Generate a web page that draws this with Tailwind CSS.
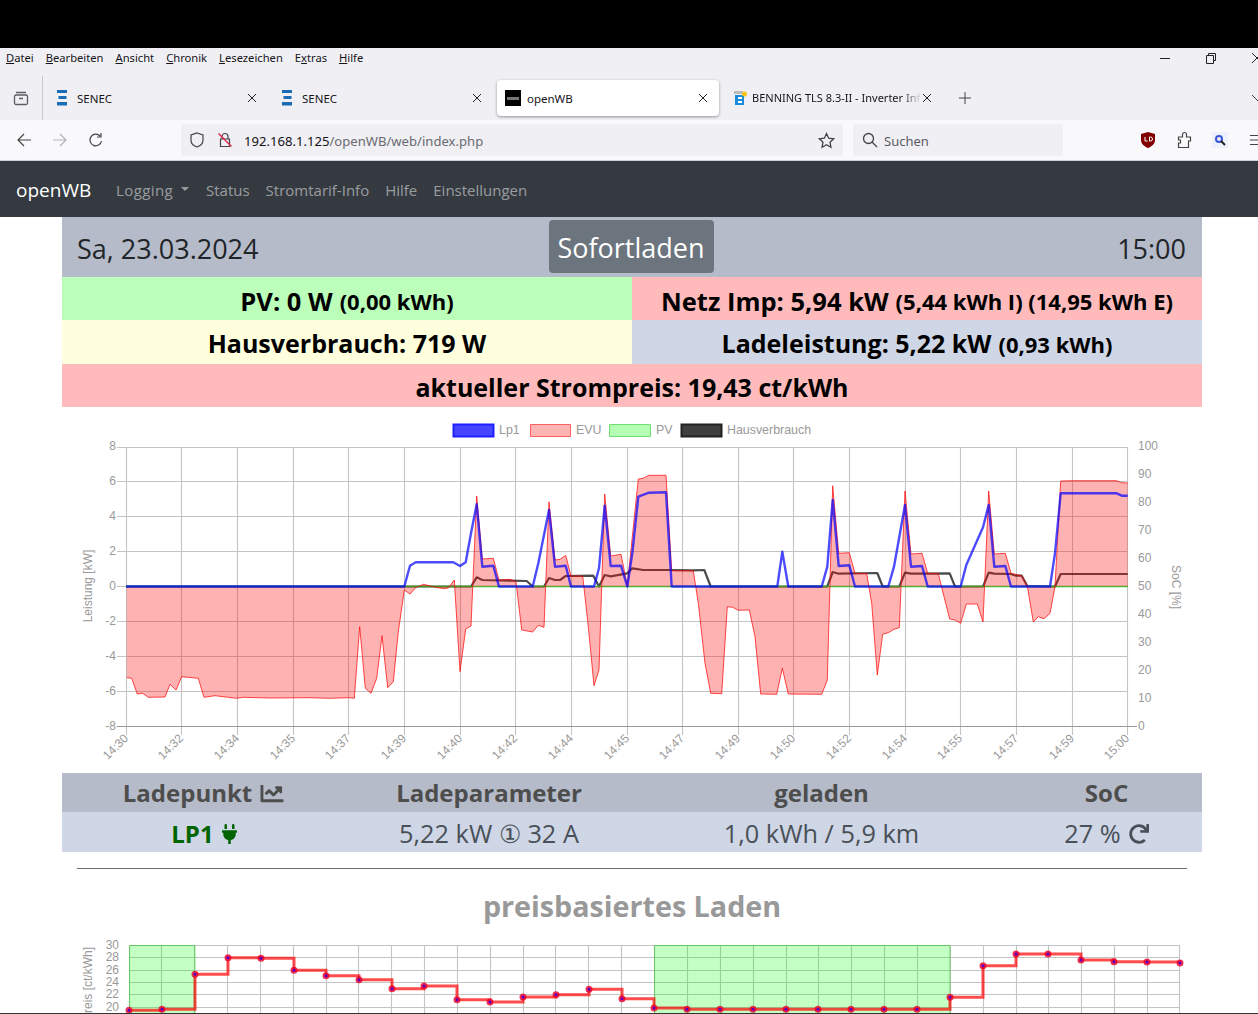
<!DOCTYPE html>
<html lang="de">
<head>
<meta charset="utf-8">
<title>openWB</title>
<script src="https://cdn.jsdelivr.net/npm/@tailwindcss/browser@4"></script>
</head>
<body class="bg-white overflow-hidden">
<div class="w-[1258px] h-[1014px] overflow-hidden flex flex-col font-['Open_Sans',sans-serif]">

  <!-- window top -->
  <div class="h-[48px] shrink-0 bg-black"></div>

  <!-- menu bar -->
  <div class="h-[28px] shrink-0 bg-[#f0f0f4] flex items-center pl-[6px] relative font-['Noto_Sans',sans-serif] text-[11.2px] text-[#15141a] gap-[12px] pb-[10px] pt-[2px]">
    <span><u>D</u>atei</span><span><u>B</u>earbeiten</span><span><u>A</u>nsicht</span><span><u>C</u>hronik</span><span><u>L</u>esezeichen</span><span>E<u>x</u>tras</span><span><u>H</u>ilfe</span>
    <div class="ml-auto flex items-center h-full">
      <svg width="12" height="12" viewBox="0 0 12 12" class="mr-[34px]" fill="none" stroke="#222"><path d="M1 6.500h10"/></svg>
      <svg width="12" height="12" viewBox="0 0 12 12" class="mr-[34px]" fill="none" stroke="#222"><path d="M1.500 3.500h7v8h-7zM3.500 3.500v-2h7v7h-2"/></svg>
      <svg width="7" height="12" viewBox="0 0 7 12" fill="none" stroke="#222"><path d="M1 1l6 6M1 11l6-6" /></svg>
    </div>
  </div>

  <!-- tab strip -->
  <div class="h-[44px] shrink-0 bg-[#f0f0f4] flex items-center font-['Noto_Sans',sans-serif] text-[11.5px] text-[#15141a] relative">
    <div class="w-[43px] h-full flex items-center justify-center border-r border-[#c8c8cc]">
      <svg width="16" height="16" viewBox="0 0 16 16" fill="none" stroke="#5b5b66" stroke-width="1.3"><path d="M3 2.500h10M1.500 6.500a1.500 1.500 0 0 1 1.500-1.500h10a1.500 1.500 0 0 1 1.500 1.500V13a1.500 1.500 0 0 1-1.500 1.500H3A1.500 1.500 0 0 1 1.500 13zM6 8.500h4"/></svg>
    </div>
    <div class="w-[224px] h-[36px] flex items-center pl-[13px] shrink-0">
      <svg width="12" height="16" viewBox="0 0 12 16" fill="#1a6db5" class="mr-[9px]"><path d="M1 0h10v3H1zM2.500 6h8v3h-8zM1 12h10v3.500H1z"/></svg>
      <span class="pt-[1px]">SENEC</span>
      <svg width="10" height="10" viewBox="0 0 10 10" stroke="#222" class="ml-auto mr-[10px]"><path d="M1 1l8 8M9 1l-8 8"/></svg>
    </div>
    <div class="w-[228px] h-[36px] flex items-center pl-[14px] shrink-0">
      <svg width="12" height="16" viewBox="0 0 12 16" fill="#1a6db5" class="mr-[9px]"><path d="M1 0h10v3H1zM2.500 6h8v3h-8zM1 12h10v3.500H1z"/></svg>
      <span class="pt-[1px]">SENEC</span>
      <svg width="10" height="10" viewBox="0 0 10 10" stroke="#222" class="ml-auto mr-[13px]"><path d="M1 1l8 8M9 1l-8 8"/></svg>
    </div>
    <div class="w-[222px] ml-[2px] h-[36px] bg-white rounded-[4px] shadow-[0_1px_3px_rgba(0,0,0,0.4)] flex items-center pl-[8px] shrink-0">
      <span class="w-[16px] h-[16px] bg-black mr-[6px] flex items-center justify-center"><span class="w-[12px] h-[3px] bg-[#777]"></span></span>
      <span class="pt-[1px]">openWB</span>
      <svg width="10" height="10" viewBox="0 0 10 10" stroke="#222" class="ml-auto mr-[11px]"><path d="M1 1l8 8M9 1l-8 8"/></svg>
    </div>
    <div class="h-[36px] flex items-center pl-[14px] shrink-0">
      <svg width="14" height="16" viewBox="0 0 14 16" class="mr-[5px] shrink-0"><path d="M1 1h9v3H1z" fill="#bbb"/><path d="M2 5h9v10H2z" fill="#1c8ad6"/><path d="M5 7h4v2H5zM5 11h4v2H5z" fill="#fff"/><circle cx="11.500" cy="4" r="2.500" fill="#f5c518"/></svg>
      <span class="whitespace-nowrap w-[170px] shrink-0 pt-[1px] text-[11px] [mask-image:linear-gradient(to_right,black_88%,transparent)]">BENNING TLS 8.3-II - Inverter Inf</span>
      <svg width="10" height="10" viewBox="0 0 10 10" stroke="#222" class="shrink-0"><path d="M1 1l8 8M9 1l-8 8"/></svg>
      <svg width="14" height="14" viewBox="0 0 14 14" stroke="#444" class="ml-[26px] shrink-0"><path d="M7 1v12M1 7h12"/></svg>
    </div>
    <svg width="6" height="8" viewBox="0 0 6 8" fill="none" stroke="#444" class="ml-auto"><path d="M0 1l6 6"/></svg>
  </div>

  <!-- toolbar -->
  <div class="h-[41px] shrink-0 bg-[#f9f9fb] border-b border-[#cfcfd8] flex items-center font-['Noto_Sans',sans-serif] text-[13px] text-[#15141a]">
    <svg width="16" height="16" viewBox="0 0 16 16" fill="none" stroke="#444" stroke-width="1.2" class="ml-[16px]"><path d="M15 8H2M8 2L2 8l6 6"/></svg>
    <svg width="16" height="16" viewBox="0 0 16 16" fill="none" stroke="#b4b4b8" stroke-width="1.2" class="ml-[20px]"><path d="M1 8h13M8 2l6 6-6 6"/></svg>
    <svg width="16" height="16" viewBox="0 0 16 16" fill="none" stroke="#444" stroke-width="1.2" class="ml-[20px]"><path d="M13.500 9a5.800 5.800 0 1 1-1.500-5M13 1v4H9"/></svg>
    <div class="w-[662px] h-[32px] ml-[77px] bg-[#f0f0f4] rounded-[4px] flex items-center pl-[8px] pr-[8px]">
      <svg width="16" height="16" viewBox="0 0 16 16" fill="none" stroke="#444" stroke-width="1.2"><path d="M8 1l6 2v5c0 3.500-3 6-6 7-3-1-6-3.500-6-7V3z"/></svg>
      <svg width="16" height="16" viewBox="0 0 16 16" fill="none" class="ml-[12px]"><path d="M5 7V4.500a3 3 0 0 1 6 0V7M3.500 7h9v7.500h-9z" stroke="#444" stroke-width="1.2"/><path d="M1.500 1.500l13 13" stroke="#e22850" stroke-width="1.4"/></svg>
      <span class="ml-[11px] pt-[3px] text-[13.1px]">192.168.1.125<span class="text-[#6a6a72]">/openWB/web/index.php</span></span>
      <svg width="17" height="17" viewBox="0 0 16 16" fill="none" stroke="#444" stroke-width="1.2" class="ml-auto"><path d="M8 1.500l2 4.300 4.700.6-3.400 3.200.9 4.700L8 12l-4.200 2.300.9-4.700L1.300 6.400 6 5.800z"/></svg>
    </div>
    <div class="w-[210px] h-[32px] ml-[10px] bg-[#f0f0f4] rounded-[4px] flex items-center pl-[9px] text-[#5b5b66]">
      <svg width="16" height="16" viewBox="0 0 16 16" fill="none" stroke="#444" stroke-width="1.3"><circle cx="6.500" cy="6.500" r="5"/><path d="M10 10l5 5"/></svg>
      <span class="ml-[6px] pt-[3px]">Suchen</span>
    </div>
    <svg width="16" height="18" viewBox="0 0 16 18" class="ml-[77px]"><path d="M8 1l7 2v6c0 4-3.500 6.500-7 8-3.500-1.500-7-4-7-8V3z" fill="#800000"/><path d="M5 6v4h2.500M9.500 6v4h1a2 2 0 0 0 0-4z" fill="none" stroke="#fff" stroke-width="1"/></svg>
    <svg width="16" height="18" viewBox="0 0 16 18" fill="none" stroke="#444" stroke-width="1.2" class="ml-[21px]"><path d="M1.500 6h4V3.500a2 2 0 0 1 4 0V6h4v4h-2v6.500h-10v-4.500h2v-3h-2z"/></svg>
    <span class="ml-[19px] w-[16px] h-[16px] bg-[#eef0fb] flex items-center justify-center">
      <svg width="12" height="12" viewBox="0 0 12 12" fill="none"><circle cx="5" cy="5" r="3" stroke="#3b55d9" stroke-width="2"/><path d="M7 7l4 4" stroke="#222" stroke-width="2"/></svg>
    </span>
    <svg width="8" height="12" viewBox="0 0 8 12" stroke="#444" stroke-width="1.200" class="ml-auto"><path d="M0 1.500h8M0 6h8M0 10.500h8"/></svg>
  </div>

  <!-- navbar -->
  <nav class="h-[56px] shrink-0 bg-[#343a40] flex items-center pl-[16px] pt-[2px] text-[15px] text-white/50">
    <span class="text-[19px] w-[100px]">
      <span class="text-white">openWB</span>
    </span>
    <span class="flex items-center w-[74px] mr-[16px] tracking-[0.4px]">Logging<span class="ml-[8px] mt-[-3px] border-x-[4px] border-x-transparent border-t-[4px] border-t-white/50"></span></span>
    <span class="mr-[16px]">Status</span>
    <span class="mr-[16px]">Stromtarif-Info</span>
    <span class="mr-[16px]">Hilfe</span>
    <span>Einstellungen</span>
  </nav>

  <!-- page -->
  <main class="flex-1 min-h-0 overflow-hidden pl-[62px] pr-[56px]">
    <div class="h-[60px] bg-[#b5bbc8] flex items-center justify-between pl-[15px] pr-[16px] pt-[4px] text-[27px] text-[#212529]">
      <span>Sa, 23.03.2024</span>
      <span>15:00</span>
    </div>
    <div class="h-[60px] mt-[-60px] flex items-center justify-center pointer-events-none">
      <span class="h-[53px] w-[165px] bg-[#6c757d] rounded-[4px] text-white text-[27px] flex items-center justify-center mb-[1px] mr-[2px] pt-[4px]">Sofortladen</span>
    </div>

    <div class="grid grid-cols-2 font-bold text-[25px] text-black text-center">
      <div class="h-[43px] pt-[5px] text-[25.5px] bg-[#bbffbb] flex items-center justify-center gap-[7px]">PV: 0 W <span class="text-[22px]">(0,00 kWh)</span></div>
      <div class="h-[43px] pt-[5px] text-[25.5px] bg-[#ffbbbb] flex items-center justify-center gap-[7px]">Netz Imp: 5,94 kW <span class="text-[22px]">(5,44 kWh I) (14,95 kWh E)</span></div>
      <div class="h-[44px] pt-[4px] bg-[#ffffdd] flex items-center justify-center">Hausverbrauch: 719 W</div>
      <div class="h-[44px] pt-[4px] bg-[#cfd6e6] flex items-center justify-center gap-[7px]">Ladeleistung: 5,22 kW <span class="text-[22px]">(0,93 kWh)</span></div>
      <div class="col-span-2 h-[43px] pt-[4px] bg-[#ffbbbb] flex items-center justify-center">aktueller Strompreis: 19,43 ct/kWh</div>
    </div>

    <!-- power chart -->
    <svg viewBox="62 407 1140 366" width="1140" height="366" class="block font-['Liberation_Sans',sans-serif]">
      <g stroke="#999" fill="none">
        <path fill="#4646ff" stroke="#2020ff" stroke-width="2" d="M453.500 424.500h40v12h-40z"/>
        <path fill="#ffb4b4" stroke="#ff6060" stroke-width="1" d="M530.500 424.500h40v12h-40z"/>
        <path fill="#b4ffb4" stroke="#70e070" stroke-width="1" d="M609.500 424.500h41v12h-41z"/>
        <path fill="#404040" stroke="#222" stroke-width="2" d="M681.500 424.500h40v12h-40z"/>
      </g>
      <g font-size="12.400" fill="#999">
        <text x="499" y="434">Lp1</text>
        <text x="576" y="434">EVU</text>
        <text x="656" y="434">PV</text>
        <text x="727" y="434">Hausverbrauch</text>
      </g>

      <!-- grid -->
      <path stroke="#c4c4c4" stroke-width="1.100" fill="none" d="M117 447.500H1128M117 481.500H1128M117 516.500H1128M117 551.500H1128M117 586.500H1128M117 621.500H1128M117 656.500H1128M117 691.500H1128M126.500 447V735M181.500 447V735M237.500 447V735M293.500 447V735M348.500 447V735M404.500 447V735M460.500 447V735M515.500 447V735M571.500 447V735M627.500 447V735M682.500 447V735M738.500 447V735M793.500 447V735M849.500 447V735M905.500 447V735M960.500 447V735M1016.500 447V735M1072.500 447V735M1127.500 447V735"/>
      <path stroke="#999" stroke-width="1.200" fill="none" d="M117 726.500H1137"/>

      <!-- Hausverbrauch -->
      <path fill="none" stroke="#000" stroke-opacity="0.7" stroke-width="2.200" stroke-linejoin="round" d="M126 586.500H471L476.700 577.300 482.300 580 510 580.700 526.700 581 532.700 586.500H544L549 578 555 580H560L565.700 576 593.300 575.700 599 586.500 604.700 575 610.700 576.300 627.300 573.300 632.300 568.300 643.300 570H666.700L693.300 570.300 704.300 570 710.700 586.500H827.300L832.700 572 838.700 573.700 877.300 573 882.700 586.500H899.300L905 572.700 911 573.700 949.700 573.300 955 586.500H983L988.700 572.700 994.300 573.700 1010.700 574 1016 575.700H1021.700L1027.300 586 1055 586.500 1060.700 574H1127.700"/>
      <!-- PV -->
      <path fill="none" stroke="#22c322" stroke-opacity="0.85" stroke-width="1.500" d="M126 586.500H1128"/>
      <!-- EVU -->
      <path fill="#ff0000" fill-opacity="0.3" stroke="none" d="M126.700 586.500V677.700L131.700 678.300 137.300 694 142.700 693.300 148.300 697.300 165 697 170 684.300 176 690 181.700 676.700 198.300 678.300 204 697.300 215 695.700 236.700 698.300 243 697.300 270 698 310 697.700 330 698.300 348.300 697.700 354.300 698.300 359.700 626.700 365.300 688.300 371 693.300 376.700 678.300 382 635.700 387.700 687.700 393.300 681.700 398.300 631.700 404.300 590 410 594 415.700 587.700 423.300 584.300 433.300 586.700 443.300 588.700 448.300 588 454.300 580 460 671.700 465.700 629 471 626 476.700 496 482.300 559 493.300 558.300 499 580 510 579.300 516 581.700 521.700 630 532.700 632 538.300 625.300 544 627.300 549 501.700 555 560 560 559.300 565.700 555.300 571 576H582.700L588.300 626.700 594 685.700 599 670 604.700 494 610.700 556 621 554.300 627.300 585.700 632.300 536.700 638.300 479 643 478.300 649 475.300H666L671.700 570.700H693.300L698.300 603.300 705 663.300 710.700 693.300 721.700 693.700 727.300 606.700 732.700 607.300 738.300 610.300 749.300 610 755 636.700 760.700 694 776.700 694.300 782.300 668.300 788.300 694 821.700 694.300 827.300 680 832.700 485.700 838.700 553.300 849.300 552.700 855 573.300 866.700 573.700 871.700 603.300 877.300 675 882.700 634.300 888.300 632.700 894 629.300 899.300 627.700 905 491 911 554 922 553.300 927.700 573.300 938.300 573.700 944 596.700 949.700 619 955 620 960.700 623.300 966.300 604H977.300L983 622 988.700 491 994.300 554 1005.300 553.300 1011 573.300 1021.700 575.700 1027.300 586 1033.300 622 1038.300 616.700 1044 618.700 1050 613.300 1055 586.700 1060.700 481 1071.700 480.700H1116.700L1121.700 482.700 1127.700 483V586.500Z"/>
      <path fill="none" stroke="#ff0000" stroke-opacity="0.7" stroke-linejoin="round" d="M126.700 677.700L131.700 678.300 137.300 694 142.700 693.300 148.300 697.300 165 697 170 684.300 176 690 181.700 676.700 198.300 678.300 204 697.300 215 695.700 236.700 698.300 243 697.300 270 698 310 697.700 330 698.300 348.300 697.700 354.300 698.300 359.700 626.700 365.300 688.300 371 693.300 376.700 678.300 382 635.700 387.700 687.700 393.300 681.700 398.300 631.700 404.300 590 410 594 415.700 587.700 423.300 584.300 433.300 586.700 443.300 588.700 448.300 588 454.300 580 460 671.700 465.700 629 471 626 476.700 496 482.300 559 493.300 558.300 499 580 510 579.300 516 581.700 521.700 630 532.700 632 538.300 625.300 544 627.300 549 501.700 555 560 560 559.300 565.700 555.300 571 576H582.700L588.300 626.700 594 685.700 599 670 604.700 494 610.700 556 621 554.300 627.300 585.700 632.300 536.700 638.300 479 643 478.300 649 475.300H666L671.700 570.700H693.300L698.300 603.300 705 663.300 710.700 693.300 721.700 693.700 727.300 606.700 732.700 607.300 738.300 610.300 749.300 610 755 636.700 760.700 694 776.700 694.300 782.300 668.300 788.300 694 821.700 694.300 827.300 680 832.700 485.700 838.700 553.300 849.300 552.700 855 573.300 866.700 573.700 871.700 603.300 877.300 675 882.700 634.300 888.300 632.700 894 629.300 899.300 627.700 905 491 911 554 922 553.300 927.700 573.300 938.300 573.700 944 596.700 949.700 619 955 620 960.700 623.300 966.300 604H977.300L983 622 988.700 491 994.300 554 1005.300 553.300 1011 573.300 1021.700 575.700 1027.300 586 1033.300 622 1038.300 616.700 1044 618.700 1050 613.300 1055 586.700 1060.700 481 1071.700 480.700H1116.700L1121.700 482.700 1127.700 483"/>
      <!-- Lp1 -->
      <path fill="none" stroke="#0000ff" stroke-opacity="0.7" stroke-width="2.400" stroke-linejoin="round" d="M126 586.500H404.300L410 565.700 415.700 562.300H453.300L460 566 465.700 562.300 471 533.300 476.700 504.300 482.300 566.700 493.300 565.700 499 586.500H532.700L538.300 563.300 549 510 555 566.700 565.700 565.700 571 586.500H594L599 568.300 604.700 505.700 610.700 566 621 565.700 627.300 586.500 632.300 553.300 638.300 496.700 649 492.700 666 492.300 671.700 586.500H777.300L782.300 551.700 788.300 586.500H821.700L827.300 566.700 832.700 500 838.700 566 849.300 565.300 855 586.500H888.300L894 566.700 905 505 911 566.700 922 566 927.700 586.500H960.700L966.300 565 983 527.300 988.700 505 994.300 566.700 1005.300 566 1011 586.500H1050L1055 553.300 1060.700 493.300H1116.700L1121.700 495.700H1127.700"/>

      <!-- axis labels -->
      <g font-size="12" fill="#999" text-anchor="end">
        <text x="116" y="450">8</text><text x="116" y="485">6</text><text x="116" y="520">4</text><text x="116" y="555">2</text><text x="116" y="590">0</text><text x="116" y="625">-2</text><text x="116" y="660">-4</text><text x="116" y="695">-6</text><text x="116" y="730">-8</text>
      </g>
      <g font-size="12" fill="#999">
        <text x="1138" y="450">100</text><text x="1138" y="478">90</text><text x="1138" y="506">80</text><text x="1138" y="534">70</text><text x="1138" y="562">60</text><text x="1138" y="590">50</text><text x="1138" y="618">40</text><text x="1138" y="646">30</text><text x="1138" y="674">20</text><text x="1138" y="702">10</text><text x="1138" y="730">0</text>
      </g>
      <g font-size="12" fill="#999" text-anchor="end">
        <text transform="rotate(-45 129 739)" x="129" y="739">14:30</text>
        <text transform="rotate(-45 184 739)" x="184" y="739">14:32</text>
        <text transform="rotate(-45 240 739)" x="240" y="739">14:34</text>
        <text transform="rotate(-45 296 739)" x="296" y="739">14:35</text>
        <text transform="rotate(-45 351 739)" x="351" y="739">14:37</text>
        <text transform="rotate(-45 407 739)" x="407" y="739">14:39</text>
        <text transform="rotate(-45 463 739)" x="463" y="739">14:40</text>
        <text transform="rotate(-45 518 739)" x="518" y="739">14:42</text>
        <text transform="rotate(-45 574 739)" x="574" y="739">14:44</text>
        <text transform="rotate(-45 630 739)" x="630" y="739">14:45</text>
        <text transform="rotate(-45 685 739)" x="685" y="739">14:47</text>
        <text transform="rotate(-45 741 739)" x="741" y="739">14:49</text>
        <text transform="rotate(-45 796 739)" x="796" y="739">14:50</text>
        <text transform="rotate(-45 852 739)" x="852" y="739">14:52</text>
        <text transform="rotate(-45 908 739)" x="908" y="739">14:54</text>
        <text transform="rotate(-45 963 739)" x="963" y="739">14:55</text>
        <text transform="rotate(-45 1019 739)" x="1019" y="739">14:57</text>
        <text transform="rotate(-45 1075 739)" x="1075" y="739">14:59</text>
        <text transform="rotate(-45 1130 739)" x="1130" y="739">15:00</text>
      </g>
      <text transform="rotate(-90 92 586)" x="92" y="586" font-size="12" fill="#999" text-anchor="middle">Leistung [kW]</text>
      <text transform="rotate(90 1172 587)" x="1172" y="587" font-size="12" fill="#999" text-anchor="middle">SoC [%]</text>
    </svg>

    <!-- charge point table -->
    <div class="grid grid-cols-[284px_286px_379px_191px] text-center text-[25.3px] text-[#495057]">
      <div class="h-[39px] pt-[1px] text-[24px] bg-[#b5bbc8] font-bold text-[#4d4d4d] flex items-center justify-center gap-[7px]">Ladepunkt
        <svg width="26" height="23" viewBox="0 0 512 512" fill="#4d4d4d"><path d="M496 384H64V80c0-8.840-7.160-16-16-16H16C7.160 64 0 71.160 0 80v336c0 17.670 14.330 32 32 32h464c8.840 0 16-7.160 16-16v-32c0-8.840-7.160-16-16-16zM464 96H345.940c-21.380 0-32.090 25.850-16.970 40.970l32.400 32.400L288 242.750l-73.370-73.370c-12.500-12.500-32.760-12.500-45.250 0l-68.690 68.690c-6.250 6.250-6.250 16.380 0 22.630l22.620 22.620c6.250 6.250 16.380 6.250 22.630 0L192 237.250l73.370 73.370c12.500 12.500 32.760 12.500 45.250 0l96-96 32.400 32.400c15.120 15.120 40.970 4.410 40.970-16.970V112c.01-8.840-7.150-16-15.990-16z"/></svg>
      </div>
      <div class="h-[39px] pt-[1px] text-[24px] bg-[#b5bbc8] font-bold text-[#4d4d4d] flex items-center justify-center">Ladeparameter</div>
      <div class="h-[39px] pt-[1px] text-[24px] bg-[#b5bbc8] font-bold text-[#4d4d4d] flex items-center justify-center">geladen</div>
      <div class="h-[39px] pt-[1px] text-[24px] bg-[#b5bbc8] font-bold text-[#4d4d4d] flex items-center justify-center">SoC</div>
      <div class="h-[40px] pt-[3px] text-[24px] bg-[#cfd6e6] font-bold text-[#006400] flex items-center justify-center gap-[8px]">LP1
        <svg width="15" height="20" viewBox="0 0 384 512" fill="#006400"><path d="M320 32a32 32 0 0 0-64 0v96h64Zm48 128H16A16 16 0 0 0 0 176v32a16 16 0 0 0 16 16H32v32A160.070 160.070 0 0 0 160 412.800V512h64V412.800A160.070 160.070 0 0 0 352 256V224h16a16 16 0 0 0 16-16V176A16 16 0 0 0 368 160ZM128 32a32 32 0 0 0-64 0v96h64Z"/></svg>
      </div>
      <div class="h-[40px] pt-[3px] bg-[#cfd6e6] flex items-center justify-center">5,22 kW ① 32 A</div>
      <div class="h-[40px] pt-[3px] bg-[#cfd6e6] flex items-center justify-center">1,0 kWh / 5,9 km</div>
      <div class="h-[40px] pt-[3px] bg-[#cfd6e6] flex items-center justify-center gap-[8px]">27 %
        <svg width="20" height="20" viewBox="0 0 512 512" fill="#495057"><path d="M500.330 0h-47.410a12 12 0 0 0-12 12.570l4 82.760A247.420 247.420 0 0 0 256 8C119.340 8 7.900 119.530 8 256.190 8.100 393.070 119.100 504 256 504a247.100 247.100 0 0 0 166.180-63.910 12 12 0 0 0 .48-17.430l-34-34a12 12 0 0 0-16.380-.55A176 176 0 1 1 402.100 157.800l-101.530-4.870a12 12 0 0 0-12.570 12v47.410a12 12 0 0 0 12 12h200.330a12 12 0 0 0 12-12V12a12 12 0 0 0-12-12z"/></svg>
      </div>
    </div>

    <hr class="mx-[15px] mt-[16px] border-t border-[#6c6c6c]">

    <h2 class="mt-[14px] text-center font-bold text-[28.7px] leading-[45px] text-[#999]">preisbasiertes Laden</h2>

    <!-- price chart, cut off by the window -->
    <svg viewBox="62 930 1140 120" width="1140" height="120" class="block mt-[2px] font-['Liberation_Sans',sans-serif]">
      <path stroke="#c4c4c4" stroke-width="1.100" fill="none" d="M129 945.500H1180M129 957.500H1180M129 970.500H1180M129 982.500H1180M129 994.500H1180M129 1007.500H1180M129.500 945V1060M161.500 945V1060M194.500 945V1060M227.500 945V1060M260.500 945V1060M293.500 945V1060M326.500 945V1060M358.500 945V1060M391.500 945V1060M424.500 945V1060M457.500 945V1060M490.500 945V1060M523.500 945V1060M555.500 945V1060M588.500 945V1060M621.500 945V1060M654.500 945V1060M687.500 945V1060M720.500 945V1060M753.500 945V1060M786.500 945V1060M818.500 945V1060M851.500 945V1060M884.500 945V1060M917.500 945V1060M950.500 945V1060M983.500 945V1060M1016.500 945V1060M1048.500 945V1060M1081.500 945V1060M1114.500 945V1060M1147.500 945V1060M1179.500 945V1060"/>
      <path fill="#00ff00" fill-opacity="0.23" stroke="#00c000" stroke-opacity="0.4" d="M129.500 945.500H195V1060H129.500ZM654.500 945.500H950V1060H654.500Z"/>
      <path fill="none" stroke="#ff0000" stroke-opacity="0.7" stroke-width="3" d="M129 1010.300H162V1009.300H195V974.300H228V957.700H261V958.300H294V970.300H326V975.700H359V979.700H392V988.700H424V986H457V999.700H490V1002H523V997H556V994.700H589V989.300H622V998.700H654V1008H687V1009.300H950V997.300H983V965.700H1016V954H1081V960H1114V961.700H1147V962H1180V963"/>
      <path fill="none" stroke="#e8002a" stroke-opacity="0.8" stroke-width="7" stroke-linecap="round" d="M129 1010.300h0M162 1009.300h0M195 974.300h0M228 957.700h0M261 958.300h0M294 970.300h0M326 975.700h0M359 979.700h0M392 988.700h0M424 986h0M457 999.700h0M490 1002h0M523 997h0M556 994.700h0M589 989.300h0M622 998.700h0M654 1008h0M687 1009.300h0M720 1009.300h0M753 1009.300h0M786 1009.300h0M818 1009.300h0M851 1009.300h0M884 1009.300h0M917 1009.300h0M950 997.300h0M983 965.700h0M1016 954h0M1048 954h0M1081 960h0M1114 961.700h0M1147 962h0M1180 963h0"/>
      <path fill="none" stroke="#5a00c8" stroke-width="3" stroke-linecap="round" d="M129 1010.300h0M162 1009.300h0M195 974.300h0M228 957.700h0M261 958.300h0M294 970.300h0M326 975.700h0M359 979.700h0M392 988.700h0M424 986h0M457 999.700h0M490 1002h0M523 997h0M556 994.700h0M589 989.300h0M622 998.700h0M654 1008h0M687 1009.300h0M720 1009.300h0M753 1009.300h0M786 1009.300h0M818 1009.300h0M851 1009.300h0M884 1009.300h0M917 1009.300h0M950 997.300h0M983 965.700h0M1016 954h0M1048 954h0M1081 960h0M1114 961.700h0M1147 962h0M1180 963h0"/>
      <g font-size="12" fill="#999" text-anchor="end">
        <text x="119" y="949">30</text><text x="119" y="961">28</text><text x="119" y="974">26</text><text x="119" y="986">24</text><text x="119" y="998">22</text><text x="119" y="1011">20</text>
      </g>
      <text transform="rotate(-90 92 984)" x="92" y="984" font-size="12" fill="#999" text-anchor="middle">Preis [ct/kWh]</text>
    </svg>
  </main>
  <div class="h-[1px] shrink-0 bg-[#333]"></div>
</div>
</body>
</html>
